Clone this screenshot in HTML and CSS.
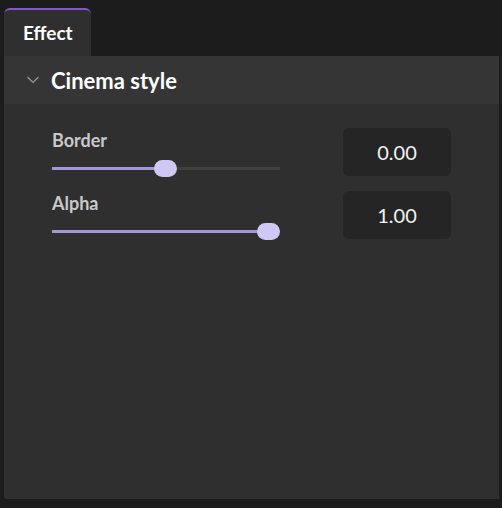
FILE: index.html
```html
<!DOCTYPE html>
<html>
<head>
<meta charset="utf-8">
<link rel="stylesheet" href="styles.css">
</head>
<body>
<div class="app">
  <div class="tabs">
    <div class="tab">Effect</div>
  </div>
  <div class="panel">
    <div class="section-header">
      <svg class="chevron" width="12" height="8" viewBox="0 0 12 8"><path d="M0.5 1 L6 6.5 L11.5 1" fill="none" stroke="#9a9a9a" stroke-width="1.2"/></svg>
      <span class="section-title">Cinema style</span>
    </div>
    <div class="section-body">
      <div class="row">
        <div class="control">
          <div class="label">Border</div>
          <div class="slider">
            <div class="track"></div>
            <div class="fill" style="width:114px"></div>
            <div class="thumb" style="left:102px"></div>
          </div>
        </div>
        <div class="value">0.00</div>
      </div>
      <div class="row">
        <div class="control">
          <div class="label">Alpha</div>
          <div class="slider">
            <div class="track"></div>
            <div class="fill" style="width:216px"></div>
            <div class="thumb" style="left:205px"></div>
          </div>
        </div>
        <div class="value">1.00</div>
      </div>
    </div>
  </div>
</div>
</body>
</html>
```
FILE: styles.css
```css
html, body {
  margin: 0;
  padding: 0;
  background: #1c1c1c;
  width: 502px;
  height: 508px;
  overflow: hidden;
  font-family: Lato, "Open Sans", sans-serif;
}
.app {
  padding: 8px 3px 9px 4px;
  height: 508px;
  box-sizing: border-box;
  display: flex;
  flex-direction: column;
}
.tabs {
  display: flex;
}
.tab {
  width: 87px;
  height: 48px;
  box-sizing: border-box;
  background: #2f2f2f;
  border-top: 2px solid #8458c8;
  border-radius: 6px 6px 0 0;
  color: #ffffff;
  font-weight: 700;
  font-size: 19px;
  padding-left: 19px;
  padding-bottom: 2px;
  display: flex;
  align-items: center;
}
.panel {
  flex: 1;
  background: #2f2f2f;
  border-radius: 0 0 0 3px;
  display: flex;
  flex-direction: column;
}
.section-header {
  height: 48px;
  background: #353535;
  display: flex;
  align-items: center;
  padding-left: 23px;
}
.chevron {
  display: block;
  margin-right: 12px;
  margin-top: -1px;
}
.section-title {
  color: #ffffff;
  font-weight: 700;
  font-size: 22px;
}
.section-body {
  padding: 24px 0 0 48px;
  display: flex;
  flex-direction: column;
  gap: 15px;
}
.row {
  display: flex;
  height: 48px;
}
.control {
  width: 228px;
  margin-right: 63px;
  display: flex;
  flex-direction: column;
}
.label {
  margin-top: 1px;
  font-size: 18px;
  line-height: 22px;
  font-weight: 700;
  color: #c9c9cc;
}
.slider {
  position: relative;
  margin-top: 9px;
  height: 17px;
}
.track {
  position: absolute;
  left: 0;
  right: 0;
  top: 7px;
  height: 3px;
  background: #3f3f3f;
}
.fill {
  position: absolute;
  left: 0;
  top: 7px;
  height: 3px;
  background: #a394dc;
}
.thumb {
  position: absolute;
  top: 0;
  width: 23px;
  height: 17px;
  border-radius: 9px;
  background: #d0c8f4;
}
.value {
  width: 108px;
  height: 48px;
  background: #252525;
  border-radius: 6px;
  color: #f2f2f2;
  font-size: 20px;
  display: flex;
  align-items: center;
  justify-content: center;
}
```
